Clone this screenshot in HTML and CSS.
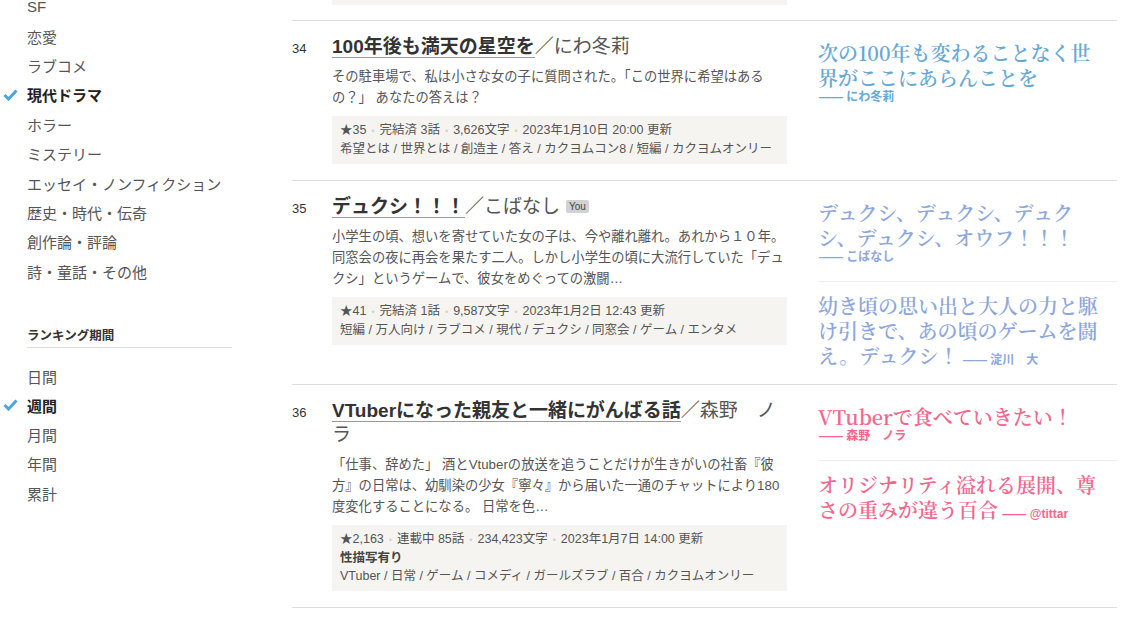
FILE: index.html
```html
<!DOCTYPE html>
<html>
<head>
    <title>ランキング - 現代ドラマ 週間</title>
    <link rel="stylesheet" href="styles.css">
</head>
<body>
    <div class="page">
        <aside class="sidebar">
            <ul class="menu">
                <li><a href="#">SF</a></li>
                <li><a href="#">恋愛</a></li>
                <li><a href="#">ラブコメ</a></li>
                <li class="is-active"><svg class="check" viewBox="0 0 15 12"><path d="M1.5 6 L5.5 10 L13.5 1.5"/></svg><a href="#">現代ドラマ</a></li>
                <li><a href="#">ホラー</a></li>
                <li><a href="#">ミステリー</a></li>
                <li><a href="#">エッセイ・ノンフィクション</a></li>
                <li><a href="#">歴史・時代・伝奇</a></li>
                <li><a href="#">創作論・評論</a></li>
                <li><a href="#">詩・童話・その他</a></li>
            </ul>

            <h3 class="menu-heading">ランキング期間</h3>
            <ul class="menu menu-period">
                <li><a href="#">日間</a></li>
                <li class="is-active"><svg class="check" viewBox="0 0 15 12"><path d="M1.5 6 L5.5 10 L13.5 1.5"/></svg><a href="#">週間</a></li>
                <li><a href="#">月間</a></li>
                <li><a href="#">年間</a></li>
                <li><a href="#">累計</a></li>
            </ul>
        </aside>

        <main class="ranking">
            <div class="ranking-tail">
                <div class="tail-box"></div>
            </div>

            <article class="work">
                <div class="rank">34</div>
                <div class="work-body">
                    <h2 class="work-title"><a href="#">100年後も満天の星空を</a><span class="work-author">／にわ冬莉</span></h2>
                    <p class="intro">その駐車場で、私は小さな女の子に質問された。「この世界に希望はあるの？」 あなたの答えは？</p>
                    <div class="meta">
                        <p>★35<span class="dot">•</span>完結済 3話<span class="dot">•</span>3,626文字<span class="dot">•</span>2023年1月10日 20:00 更新</p>
                        <p>希望とは / 世界とは / 創造主 / 答え / カクヨムコン8 / 短編 / カクヨムオンリー</p>
                    </div>
                </div>
                <div class="reviews reviews-blue">
                    <p class="review"><span class="copy">次の100年も変わることなく世界がここにあらんことを</span> <span class="reviewer">―― にわ冬莉</span></p>
                </div>
            </article>

            <article class="work">
                <div class="rank">35</div>
                <div class="work-body">
                    <h2 class="work-title"><a href="#">デュクシ！！！</a><span class="work-author">／こばなし</span><span class="badge">You</span></h2>
                    <p class="intro">小学生の頃、想いを寄せていた女の子は、今や離れ離れ。あれから１０年。同窓会の夜に再会を果たす二人。しかし小学生の頃に大流行していた「デュクシ」というゲームで、彼女をめぐっての激闘…</p>
                    <div class="meta">
                        <p>★41<span class="dot">•</span>完結済 1話<span class="dot">•</span>9,587文字<span class="dot">•</span>2023年1月2日 12:43 更新</p>
                        <p>短編 / 万人向け / ラブコメ / 現代 / デュクシ / 同窓会 / ゲーム / エンタメ</p>
                    </div>
                </div>
                <div class="reviews reviews-lavender">
                    <p class="review"><span class="copy">デュクシ、デュクシ、デュクシ、デュクシ、オウフ！！！</span> <span class="reviewer">―― こばなし</span></p>
                    <p class="review"><span class="copy">幼き頃の思い出と大人の力と駆け引きで、あの頃のゲームを闘え。デュクシ！</span> <span class="reviewer">―― 淀川　大</span></p>
                </div>
            </article>

            <article class="work">
                <div class="rank">36</div>
                <div class="work-body">
                    <h2 class="work-title"><a href="#">VTuberになった親友と一緒にがんばる話</a><span class="work-author">／森野　ノラ</span></h2>
                    <p class="intro">「仕事、辞めた」 酒とVtuberの放送を追うことだけが生きがいの社畜『彼方』の日常は、幼馴染の少女『寧々』から届いた一通のチャットにより180度変化することになる。 日常を色…</p>
                    <div class="meta">
                        <p>★2,163<span class="dot">•</span>連載中 85話<span class="dot">•</span>234,423文字<span class="dot">•</span>2023年1月7日 14:00 更新</p>
                        <p class="rating">性描写有り</p>
                        <p>VTuber / 日常 / ゲーム / コメディ / ガールズラブ / 百合 / カクヨムオンリー</p>
                    </div>
                </div>
                <div class="reviews reviews-pink">
                    <p class="review"><span class="copy">VTuberで食べていきたい！</span> <span class="reviewer">―― 森野　ノラ</span></p>
                    <p class="review"><span class="copy">オリジナリティ溢れる展開、尊さの重みが違う百合</span> <span class="reviewer">―― @tittar</span></p>
                </div>
            </article>
        </main>
    </div>
</body>
</html>
```

FILE: styles.css
```css
body {
    margin: 0;
    background-color: #fff;
    color: #444;
    font-family: 'Liberation Sans', 'Noto Sans CJK JP', sans-serif;
}

a {
    color: inherit;
    text-decoration: none;
}

p, h2, h3, ul {
    margin: 0;
    padding: 0;
}

/* the page is scrolled a little */
.page {
    display: flex;
    margin-top: -8px;
}

/* sidebar */

.sidebar {
    width: 205px;
    padding-left: 27px;
    flex-shrink: 0;
}

.menu {
    list-style: none;
}

.menu li {
    display: flex;
    align-items: center;
    height: 29.4px;
    font-size: 15px;
    color: #555;
}

.menu-period {
    margin-top: 13.5px;
}

.menu-period li {
    height: 29.25px;
}

.menu li.is-active {
    color: #222;
    font-weight: bold;
}

.check {
    width: 15px;
    height: 12px;
    margin-left: -24px;
    margin-right: 9px;
}

.check path {
    fill: none;
    stroke: #4aa5e0;
    stroke-width: 3;
}

.menu-heading {
    margin-top: 41px;
    padding-bottom: 2px;
    border-bottom: 1px solid #ddd;
    font-size: 12.5px;
    line-height: 18px;
    color: #333;
}

/* ranking list */

.ranking {
    width: 825px;
    margin-left: 60px;
    flex-shrink: 0;
}

.ranking-tail {
    padding-bottom: 15px;
    border-bottom: 1px solid #ddd;
}

.tail-box {
    width: 455px;
    height: 13px;
    margin-left: 40px;
    background-color: #f5f4f1;
}

.work {
    display: flex;
    padding: 14px 0 16px;
    border-bottom: 1px solid #ddd;
}

.rank {
    width: 40px;
    padding-top: 2px;
    font-size: 13px;
    line-height: 24px;
    color: #333;
    flex-shrink: 0;
}

.work-body {
    width: 455px;
    flex-shrink: 0;
}

.work-title {
    font-size: 19px;
    line-height: 24px;
    font-weight: normal;
}

.work-title a {
    color: #333;
    font-weight: bold;
    border-bottom: 1px solid #999;
}

.work-author {
    color: #555;
}

.badge {
    display: inline-block;
    margin-left: 6px;
    padding: 0 3px;
    background-color: #d2d2d2;
    border-radius: 2px;
    color: #444;
    font-size: 10px;
    line-height: 13px;
    vertical-align: 3px;
}

.intro {
    margin-top: 7px;
    font-size: 13.3px;
    line-height: 21px;
    color: #555;
}

.meta {
    margin-top: 8px;
    padding: 5px 8px 6px;
    background-color: #f5f4f1;
    font-size: 12.5px;
    line-height: 18px;
    color: #555;
}

.meta .rating {
    font-weight: bold;
    color: #444;
}

.dot {
    margin: 0 5px;
    color: #d0d0d0;
    font-size: 9px;
}

/* review catch copies */

.reviews {
    flex: 1;
    margin-left: 31px;
    padding-top: 5px;
}

.review {
    padding: 0 10px 16px 0;
    font-size: 12px;
    line-height: 15px;
}

.review + .review {
    padding-top: 11px;
    padding-bottom: 0;
    border-top: 1px solid #eee;
}

.copy {
    font-family: 'Noto Serif CJK JP', 'Liberation Serif', 'Noto Sans CJK JP', serif;
    font-size: 20px;
    font-weight: 600;
    line-height: 25px;
}

.reviewer {
    margin-left: 1px;
    font-weight: bold;
    white-space: nowrap;
}

.reviews-blue {
    color: #66a8d4;
}

.reviews-lavender {
    color: #8da7dc;
}

.reviews-pink {
    color: #f4668b;
}
```
